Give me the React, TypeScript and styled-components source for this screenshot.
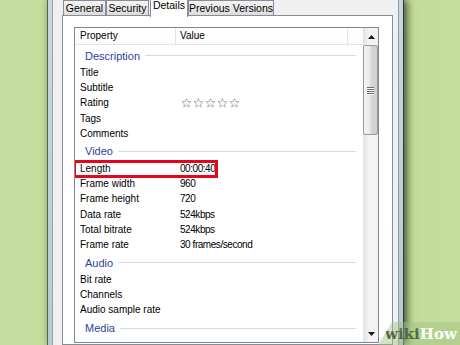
import styled, { createGlobalStyle } from 'styled-components'

const GlobalStyle = createGlobalStyle`
  html, body {
    margin: 0;
    padding: 0;
  }
  body {
    overflow: hidden;
    background: #c3dc9b;
    font-family: 'Liberation Sans', Arial, sans-serif;
  }
`

type Item = { name: string; value?: string; rating?: boolean; marked?: boolean }
type Group = { title: string; items: Item[] }

const groups: Group[] = [
  {
    title: 'Description',
    items: [
      { name: 'Title' },
      { name: 'Subtitle' },
      { name: 'Rating', rating: true },
      { name: 'Tags' },
      { name: 'Comments' },
    ],
  },
  {
    title: 'Video',
    items: [
      { name: 'Length', value: '00:00:40', marked: true },
      { name: 'Frame width', value: '960' },
      { name: 'Frame height', value: '720' },
      { name: 'Data rate', value: '524kbps' },
      { name: 'Total bitrate', value: '524kbps' },
      { name: 'Frame rate', value: '30 frames/second' },
    ],
  },
  {
    title: 'Audio',
    items: [{ name: 'Bit rate' }, { name: 'Channels' }, { name: 'Audio sample rate' }],
  },
  { title: 'Media', items: [] },
]

const tabs = [
  { label: 'General', width: 43 },
  { label: 'Security', width: 43 },
  { label: 'Details', width: 38, active: true },
  { label: 'Previous Versions', width: 86 },
]

function Star() {
  return (
    <svg width="11" height="10" viewBox="0 0 11 10.5">
      <polygon
        points="5.5,0.5 6.85,3.64 10.26,3.96 7.69,6.21 8.44,9.55 5.5,7.8 2.56,9.55 3.31,6.21 0.74,3.96 4.15,3.64"
        fill="#fbfbfb"
        stroke="#a8a8a8"
        strokeWidth="0.9"
        strokeLinejoin="round"
      />
    </svg>
  )
}

function Arrow({ down }: { down?: boolean }) {
  return (
    <svg width="7" height="4" viewBox="0 0 7 4">
      <polygon points={down ? '0,0 7,0 3.5,4' : '3.5,0 7,4 0,4'} fill="#1a1a1a" />
    </svg>
  )
}

function App() {
  return (
    <Page>
      <GlobalStyle />
      <Frame>
        <Dialog>
          <TabStrip>
            {tabs.map((t) => (
              <Tab key={t.label} $width={t.width} $active={t.active}>
                {t.label}
              </Tab>
            ))}
          </TabStrip>
          <Panel>
            <ListBox>
              <Content>
                <HeaderRow>
                  <HeaderCell $width={101}>Property</HeaderCell>
                  <HeaderCell $width={172}>Value</HeaderCell>
                </HeaderRow>
                {groups.map((g) => (
                  <div key={g.title}>
                    <GroupHeader>
                      <span>{g.title}</span>
                      <GroupLine />
                    </GroupHeader>
                    {g.items.map((it) => (
                      <Row key={it.name}>
                        <NameCell>{it.name}</NameCell>
                        <ValueCell>
                          {it.rating ? (
                            <Stars>
                              {[0, 1, 2, 3, 4].map((i) => (
                                <Star key={i} />
                              ))}
                            </Stars>
                          ) : (
                            it.value
                          )}
                        </ValueCell>
                        {it.marked && <Marker />}
                      </Row>
                    ))}
                  </div>
                ))}
              </Content>
              <ScrollBar>
                <ScrollButton $height={17}>
                  <Arrow />
                </ScrollButton>
                <Thumb>
                  <Grip>
                    <i />
                    <i />
                    <i />
                    <i />
                  </Grip>
                </Thumb>
                <Track />
                <ScrollButton $height={16}>
                  <Arrow down />
                </ScrollButton>
              </ScrollBar>
            </ListBox>
          </Panel>
        </Dialog>
      </Frame>
      <Watermark>
        <b>wiki</b>
        <em>How</em>
      </Watermark>
    </Page>
  )
}

const Page = styled.div`
  position: relative;
  display: flex;
  width: 460px;
  height: 345px;
  overflow: hidden;
  background: linear-gradient(90deg, #c5dd9e 0%, #c2da98 50%, #c4dd9c 100%);
`

const Frame = styled.div`
  display: flex;
  margin-left: 47px;
  height: 100%;
  padding: 0 4px;
  border-left: 1px solid #56644f;
  border-right: 1px solid #2f3b30;
  background: linear-gradient(180deg, #c9d6df 0%, #b4cbd2 100%);
  box-shadow: 3px 0 8px rgba(20, 30, 20, 0.75);
`

const Dialog = styled.div`
  display: flex;
  flex-direction: column;
  padding: 0 5px 0 9px;
  background: #f0f0f0;
  border-left: 1px solid #96a4ad;
  border-right: 1px solid #8e9ba4;
`

const TabStrip = styled.div`
  display: flex;
  align-items: flex-end;
  height: 16px;
  padding-left: 1px;
`

const Tab = styled.div<{ $width: number; $active?: boolean }>`
  position: relative;
  box-sizing: border-box;
  width: ${(p) => p.$width}px;
  height: ${(p) => (p.$active ? 19 : 16)}px;
  margin-left: ${(p) => (p.$active ? 1 : 0)}px;
  margin-bottom: ${(p) => (p.$active ? -1 : 0)}px;
  border: 1px solid #898c95;
  border-bottom: ${(p) => (p.$active ? 'none' : '1px solid #898c95')};
  background: ${(p) => (p.$active ? '#ffffff' : 'linear-gradient(180deg, #f4f4f4 0%, #e9e9e9 50%, #dcdcdc 100%)')};
  z-index: ${(p) => (p.$active ? 2 : 1)};
  font-size: 10.5px;
  line-height: ${(p) => (p.$active ? 13 : 15)}px;
  color: #000;
  text-align: center;
  white-space: nowrap;
`

const Panel = styled.div`
  flex: 1;
  box-sizing: border-box;
  width: 331px;
  margin-top: -1px;
  padding: 11px 13px 0 11px;
  border: 1px solid #898c95;
  background: #ffffff;
`

const ListBox = styled.div`
  display: flex;
  box-sizing: border-box;
  width: 305px;
  height: 316px;
  border: 1px solid #828790;
  background: #ffffff;
`

const Content = styled.div`
  flex: 1;
  overflow: hidden;
  font-size: 10px;
  color: #000;
`

const HeaderRow = styled.div`
  display: flex;
  height: 16px;
  border-bottom: 1px solid #e5e5e5;
  background: linear-gradient(180deg, #ffffff 0%, #fbfbfb 100%);
`

const HeaderCell = styled.div<{ $width: number }>`
  box-sizing: border-box;
  width: ${(p) => p.$width}px;
  padding-left: 5px;
  border-right: 1px solid #e3e3e3;
  line-height: 16px;
  & + & {
    padding-left: 4px;
  }
`

const GroupHeader = styled.div`
  display: flex;
  align-items: center;
  height: 20px;
  padding: 1px 7px 0 10px;
  box-sizing: border-box;
  font-size: 11px;
  color: #2b3f99;
`

const GroupLine = styled.div`
  flex: 1;
  height: 1px;
  margin-left: 5px;
  background: #d2dae2;
`

const Row = styled.div`
  position: relative;
  display: grid;
  grid-template-columns: 101px 1fr;
  height: 15.2px;
  line-height: 15.2px;
  white-space: nowrap;
`

const NameCell = styled.div`
  padding-left: 5px;
`

const ValueCell = styled.div`
  padding-left: 4px;
  letter-spacing: -0.45px;
`

const Stars = styled.div`
  display: flex;
  gap: 1px;
  height: 100%;
  align-items: center;
  margin-left: 1px;
`

const Marker = styled.div`
  position: absolute;
  left: -2px;
  top: -1px;
  width: 145px;
  height: 18px;
  box-sizing: border-box;
  border: 3px solid #e4061c;
  pointer-events: none;
`

const ScrollBar = styled.div`
  display: flex;
  flex-direction: column;
  width: 15px;
  background: linear-gradient(90deg, #e6e6e6 0%, #f3f3f3 40%, #f3f3f3 100%);
  border-left: 1px solid #e4e4e4;
  box-sizing: border-box;
`

const ScrollButton = styled.div<{ $height: number }>`
  display: flex;
  align-items: center;
  justify-content: center;
  height: ${(p) => p.$height}px;
  flex-shrink: 0;
`

const Thumb = styled.div`
  display: flex;
  align-items: center;
  justify-content: center;
  height: 90px;
  flex-shrink: 0;
  margin: 0 0 0 -1px;
  box-sizing: border-box;
  border: 1px solid #9a9a9a;
  border-radius: 2px;
  background: linear-gradient(90deg, #f5f5f5 0%, #e9e9e9 45%, #d6d6d6 55%, #cfcfcf 100%);
`

const Grip = styled.div`
  display: flex;
  flex-direction: column;
  gap: 1px;
  i {
    display: block;
    width: 7px;
    height: 1px;
    background: #6e6e6e;
    box-shadow: 0 1px 0 #fafafa;
  }
`

const Track = styled.div`
  flex: 1;
`

const Watermark = styled.div`
  position: absolute;
  right: 0;
  bottom: 0;
  display: flex;
  align-items: flex-end;
  box-sizing: border-box;
  width: 82px;
  height: 23px;
  padding: 0 0 2px 7px;
  background: rgba(160, 192, 128, 0.45);
  clip-path: polygon(14px 0, 100% 0, 100% 100%, 0 100%);
  font-family: 'DejaVu Serif', 'Liberation Serif', serif;
  font-size: 15px;
  font-weight: bold;
  line-height: 17px;
  b {
    color: #566847;
  }
  em {
    font-style: normal;
    color: #ffffff;
  }
`

export default App
